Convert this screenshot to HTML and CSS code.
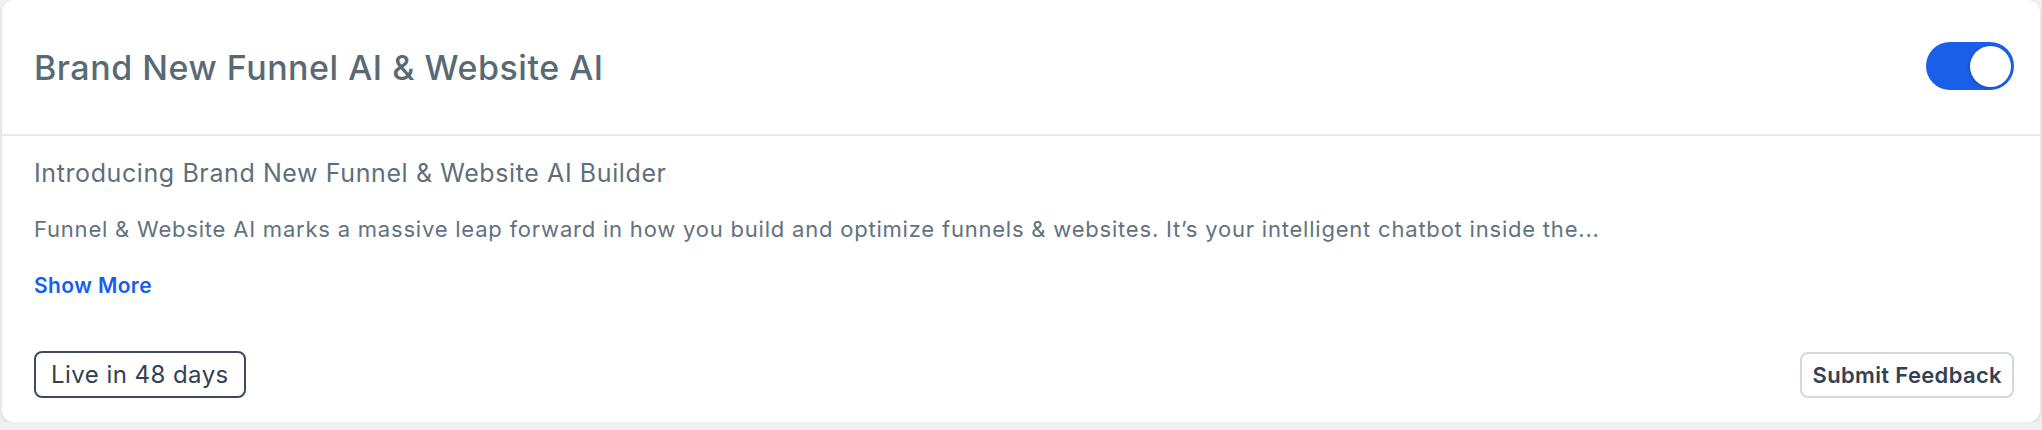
FILE: index.html
```html
<!DOCTYPE html>
<html lang="en">
<head>
<meta charset="utf-8">
<title>Brand New Funnel AI &amp; Website AI</title>
<link rel="stylesheet" href="styles.css">
</head>
<body>
<div class="card">
  <div class="card-header">
    <h2 class="title">Brand New Funnel AI &amp; Website AI</h2>
    <label class="toggle">
      <span class="knob"></span>
    </label>
  </div>
  <div class="card-body">
    <p class="subtitle">Introducing Brand New Funnel &amp; Website AI Builder</p>
    <p class="desc">Funnel &amp; Website AI marks a massive leap forward in how you build and optimize funnels &amp; websites. It’s your intelligent chatbot inside the...</p>
    <a class="show-more" href="#">Show More</a>
    <div class="footer">
      <span class="badge">Live in 48 days</span>
      <button class="btn">Submit Feedback</button>
    </div>
  </div>
</div>
</body>
</html>
```
FILE: styles.css
```css
html, body {
  margin: 0;
  padding: 0;
  background: #eef0f4;
  font-family: Inter, "Noto Sans", sans-serif;
}
body {
  padding: 0 2px 0 2px;
}
.card {
  background: #ffffff;
  border-radius: 12px;
  height: 422px;
  box-sizing: border-box;
  box-shadow: 0 2px 5px rgba(16, 24, 40, 0.10);
  display: flex;
  flex-direction: column;
}
.card-header {
  box-sizing: border-box;
  border-bottom: 2px solid #e8eaef;
  display: flex;
  align-items: center;
  justify-content: space-between;
  padding: 0 26px 0 32px;
  flex-shrink: 0;
  height: 136px;
}
.title {
  margin: 0;
  font-size: 34px;
  font-weight: 500;
  color: #5a6a75;
  letter-spacing: 0.52px;
}
.toggle {
  width: 88px;
  height: 48px;
  border-radius: 24px;
  background: #1a5fe8;
  display: flex;
  align-items: center;
  justify-content: flex-end;
  padding: 0 3px;
  box-sizing: border-box;
  margin-top: -2px;
}
.knob {
  width: 41px;
  height: 41px;
  border-radius: 50%;
  background: #ffffff;
  box-shadow: -1px 1px 3px rgba(16, 24, 40, 0.25);
}
.card-body {
  padding: 0 26px 0 32px;
  display: flex;
  flex-direction: column;
  flex: 1;
}
.subtitle {
  margin: 19px 0 0;
  font-size: 25px;
  line-height: 36px;
  color: #5f6f7a;
  letter-spacing: 0.6px;
}
.desc {
  margin: 22px 0 0;
  font-size: 22px;
  line-height: 32px;
  color: #627280;
  letter-spacing: 0.79px;
}
.show-more {
  margin-top: 26px;
  font-size: 21px;
  line-height: 30px;
  font-weight: 600;
  color: #155eef;
  text-decoration: none;
  align-self: flex-start;
  letter-spacing: 0.4px;
}
.footer {
  margin-top: auto;
  margin-bottom: 24px;
  display: flex;
  justify-content: space-between;
  align-items: center;
}
.badge {
  box-sizing: border-box;
  height: 47px;
  padding: 0 15px;
  border: 2px solid #3f4b5e;
  border-radius: 8px;
  font-size: 24px;
  color: #344054;
  display: flex;
  align-items: center;
  letter-spacing: 0.45px;
}
.btn {
  box-sizing: border-box;
  height: 46px;
  padding: 0 10px;
  border: 2px solid #d3d8e0;
  border-radius: 8px;
  background: #ffffff;
  font-family: Inter, "Noto Sans", sans-serif;
  font-size: 22px;
  font-weight: 600;
  color: #344054;
  letter-spacing: 0.35px;
}
```
